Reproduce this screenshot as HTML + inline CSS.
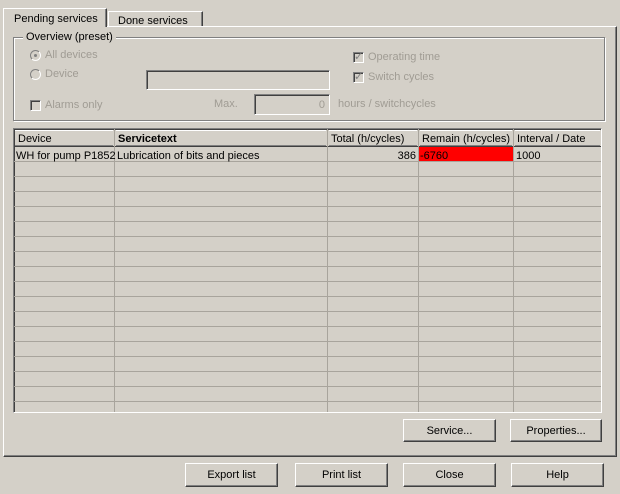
<!DOCTYPE html>
<html><head><style>
body{margin:0;width:620px;height:494px;background:#d4d0c8;font-family:"Liberation Sans",Arial,sans-serif;font-size:11px;color:#000;position:relative;overflow:hidden}
.a{position:absolute}
.btn{position:absolute;background:#d4d0c8;text-align:center;line-height:23px;border-top:1px solid #fff;border-left:1px solid #fff;border-right:1px solid #404040;border-bottom:1px solid #404040;box-shadow:inset -1px -1px 0 #808080;box-sizing:border-box}
.sunk{position:absolute;box-sizing:border-box;border-top:1px solid #808080;border-left:1px solid #808080;border-right:1px solid #fff;border-bottom:1px solid #fff;box-shadow:inset 1px 1px 0 #404040}
.dis{color:#a09c94}
.cb{position:absolute;width:11px;height:11px;box-sizing:border-box;border:1px solid #808080;border-right-color:#fff;border-bottom-color:#fff;box-shadow:inset 1px 1px 0 #404040}
.rd{position:absolute;width:11px;height:11px;border-radius:50%;box-sizing:border-box;border:1px solid #808080;border-right-color:#fff;border-bottom-color:#fff}
</style></head><body>
<div class="a" style="left:3px;top:26px;width:612px;height:429px;border-top:1px solid #fff;border-left:1px solid #fff;border-right:1px solid #404040;border-bottom:1px solid #404040;box-shadow:inset -1px -1px 0 #808080"></div>
<div class="a" style="left:3px;top:8px;width:104px;height:19px;background:#d4d0c8;border-top:1px solid #fff;border-left:1px solid #fff;border-right:1px solid #404040;box-shadow:inset -1px 0 0 #808080;box-sizing:border-box;padding:4px 0 0 10px">Pending services</div>
<div class="a" style="left:108px;top:11px;width:95px;height:15px;border-top:1px solid #fff;border-left:1px solid #fff;border-right:1px solid #404040;box-shadow:inset -1px 0 0 #808080;box-sizing:border-box;padding:3px 0 0 9px">Done services</div>
<div class="a" style="left:13px;top:37px;width:590px;height:82px;border:1px solid #808080;box-shadow:1px 1px 0 #fff,inset 1px 1px 0 #fff"></div>
<div class="a" style="left:23px;top:31px;background:#d4d0c8;padding:0 3px">Overview (preset)</div>
<div class="rd" style="left:30px;top:50px"><div style="position:absolute;left:3px;top:3px;width:3px;height:3px;background:#808080;border-radius:50%"></div></div>
<div class="a dis" style="left:45px;top:49px">All devices</div>
<div class="rd" style="left:30px;top:69px"></div>
<div class="a dis" style="left:45px;top:68px">Device</div>
<div class="sunk" style="left:146px;top:70px;width:184px;height:20px"></div>
<div class="cb" style="left:30px;top:100px"></div>
<div class="a dis" style="left:45px;top:99px">Alarms only</div>
<div class="a dis" style="left:214px;top:98px">Max.</div>
<div class="sunk" style="left:254px;top:94px;width:76px;height:21px;text-align:right;padding:4px 4px 0 0;color:#a09c94">0</div>
<div class="a dis" style="left:338px;top:98px">hours / switchcycles</div>
<div class="cb" style="left:353px;top:52px"><span style="position:absolute;left:0;top:-3px;font-size:11px;color:#808080">✓</span></div>
<div class="a dis" style="left:368px;top:51px">Operating time</div>
<div class="cb" style="left:353px;top:72px"><span style="position:absolute;left:0;top:-3px;font-size:11px;color:#808080">✓</span></div>
<div class="a dis" style="left:368px;top:71px">Switch cycles</div>
<div class="a" style="left:13px;top:128px;width:589px;height:285px;border-top:1px solid #808080;border-left:1px solid #808080;border-right:1px solid #fff;border-bottom:1px solid #fff;box-sizing:border-box;box-shadow:inset 1px 1px 0 #404040;overflow:hidden">
<svg width="589" height="285" style="position:absolute;left:-1px;top:-1px">
<g stroke="#a8a49c" stroke-width="1">
<line x1="0" y1="33.5" x2="588" y2="33.5"/>
<line x1="0" y1="48.5" x2="588" y2="48.5"/>
<line x1="0" y1="63.5" x2="588" y2="63.5"/>
<line x1="0" y1="78.5" x2="588" y2="78.5"/>
<line x1="0" y1="93.5" x2="588" y2="93.5"/>
<line x1="0" y1="108.5" x2="588" y2="108.5"/>
<line x1="0" y1="123.5" x2="588" y2="123.5"/>
<line x1="0" y1="138.5" x2="588" y2="138.5"/>
<line x1="0" y1="153.5" x2="588" y2="153.5"/>
<line x1="0" y1="168.5" x2="588" y2="168.5"/>
<line x1="0" y1="183.5" x2="588" y2="183.5"/>
<line x1="0" y1="198.5" x2="588" y2="198.5"/>
<line x1="0" y1="213.5" x2="588" y2="213.5"/>
<line x1="0" y1="228.5" x2="588" y2="228.5"/>
<line x1="0" y1="243.5" x2="588" y2="243.5"/>
<line x1="0" y1="258.5" x2="588" y2="258.5"/>
<line x1="0" y1="273.5" x2="588" y2="273.5"/>
<line x1="101.5" y1="0" x2="101.5" y2="285"/>
<line x1="314.5" y1="0" x2="314.5" y2="285"/>
<line x1="405.5" y1="0" x2="405.5" y2="285"/>
<line x1="500.5" y1="0" x2="500.5" y2="285"/>
<line x1="588.5" y1="0" x2="588.5" y2="285"/>
</g>
<rect x="406" y="19" width="94" height="14" fill="#ff0000"/>
<g fill="none">
<path d="M2 18.5H101M102 18.5H314M315 18.5H405M406 18.5H500M501 18.5H588" stroke="#404040"/>
<path d="M2 17.5H100M103 17.5H313M316 17.5H404M407 17.5H499M502 17.5H587" stroke="#808080"/>
<path d="M2 2.5H100M103 2.5H313M316 2.5H404M407 2.5H499M502 2.5H587" stroke="#fff"/>
</g>
</svg>
<div class="a" style="left:4px;top:4px">Device</div>
<div class="a" style="left:104px;top:4px;font-weight:bold">Servicetext</div>
<div class="a" style="left:317px;top:4px">Total (h/cycles)</div>
<div class="a" style="left:408px;top:4px">Remain (h/cycles)</div>
<div class="a" style="left:503px;top:4px">Interval / Date</div>
<div class="a" style="left:2px;top:21px">WH for pump P1852</div>
<div class="a" style="left:103px;top:21px">Lubrication of bits and pieces</div>
<div class="a" style="left:314px;top:21px;width:88px;text-align:right">386</div>
<div class="a" style="left:406px;top:21px">-6760</div>
<div class="a" style="left:502px;top:21px">1000</div>
</div>
<div class="btn" style="left:403px;top:419px;width:93px;height:23px;line-height:22px">Service...</div>
<div class="btn" style="left:510px;top:419px;width:92px;height:23px;line-height:22px">Properties...</div>
<div class="btn" style="left:185px;top:463px;width:93px;height:24px">Export list</div>
<div class="btn" style="left:295px;top:463px;width:93px;height:24px">Print list</div>
<div class="btn" style="left:403px;top:463px;width:93px;height:24px">Close</div>
<div class="btn" style="left:511px;top:463px;width:93px;height:24px">Help</div>
</body></html>
